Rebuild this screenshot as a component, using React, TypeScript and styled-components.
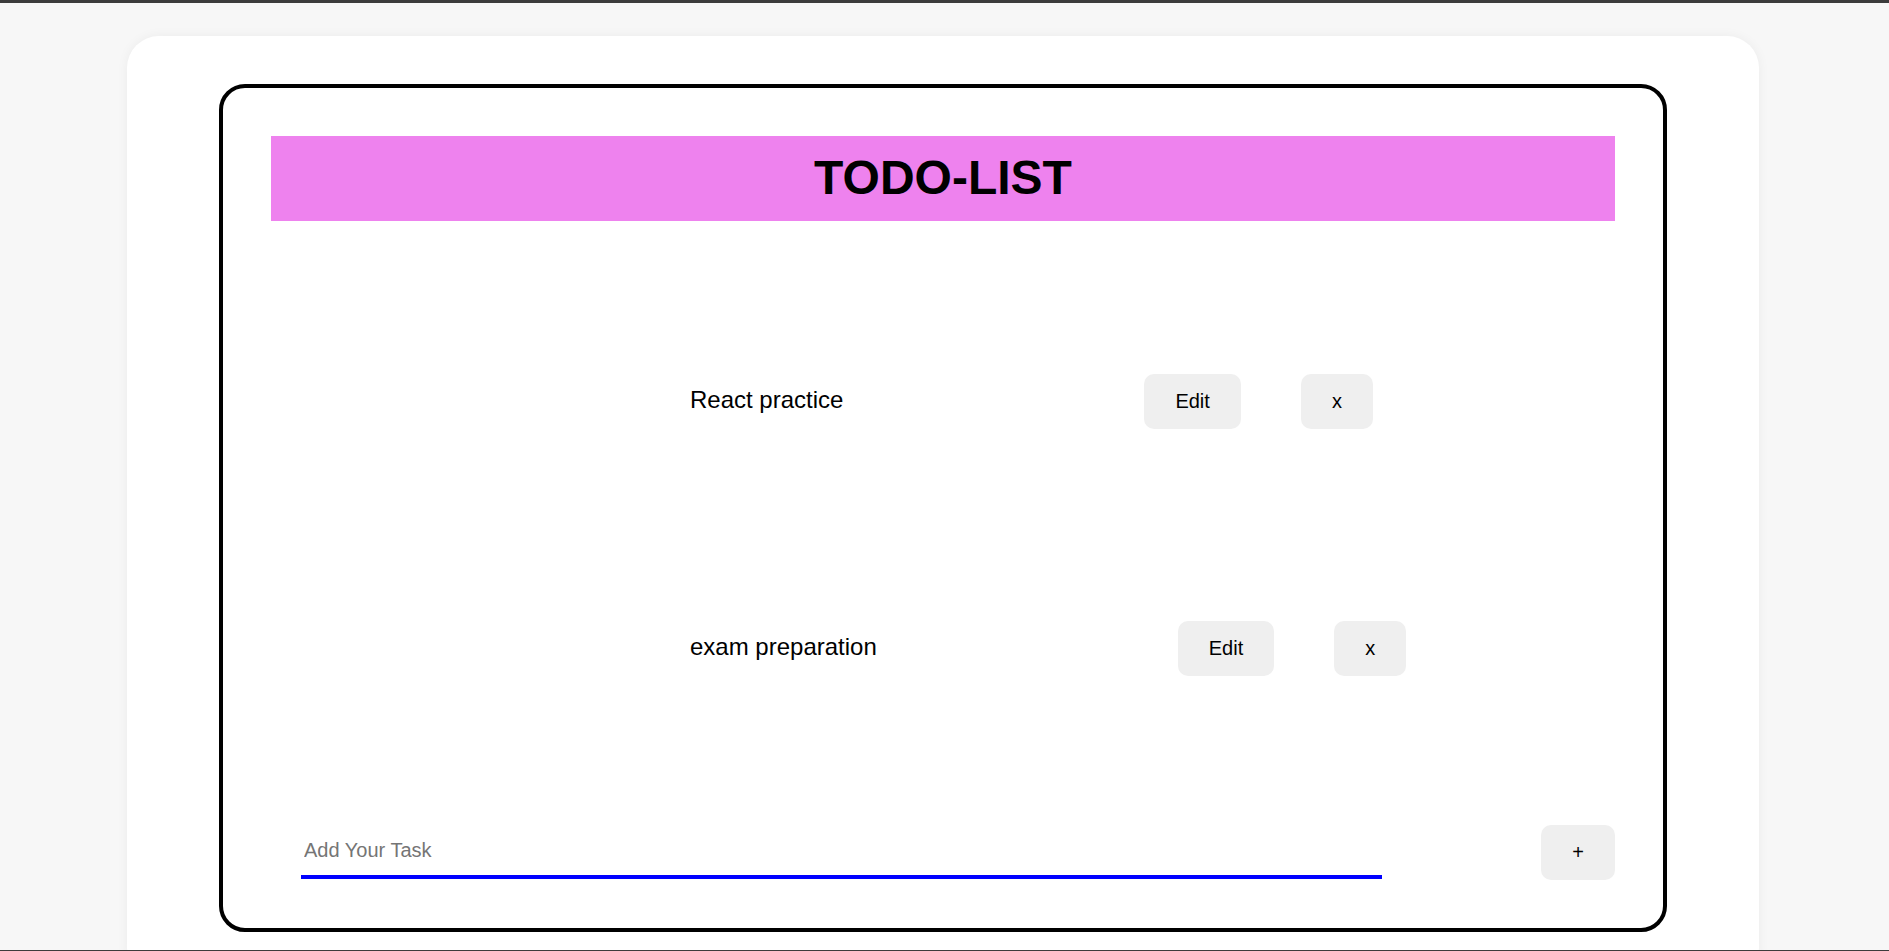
import React, { useState } from "react";
import styled, { createGlobalStyle } from "styled-components";

const GlobalStyle = createGlobalStyle`
  html, body {
    margin: 0;
    padding: 0;
    background: #f7f7f7;
    font-family: "Liberation Sans", Arial, sans-serif;
  }
  body::before {
    content: "";
    position: fixed;
    top: 0;
    left: 0;
    right: 0;
    height: 3px;
    background: #3c3c3c;
    z-index: 10;
  }
  body::after {
    content: "";
    position: fixed;
    bottom: 0;
    left: 0;
    right: 0;
    height: 1px;
    background: #3c3c3c;
    z-index: 10;
  }
`;

const Page = styled.div`
  padding: 36px 3px 0 0;
`;

const Card = styled.main`
  width: 1632px;
  margin: 0 auto;
  box-sizing: border-box;
  padding: 48px 92px;
  background: #ffffff;
  border-radius: 32px;
  box-shadow: 0 0 12px rgba(0, 0, 0, 0.05);
`;

const Frame = styled.section`
  box-sizing: border-box;
  border: 4px solid #000000;
  border-radius: 26px;
  padding: 48px;
  display: flex;
  flex-direction: column;
`;

const Header = styled.h1`
  margin: 0;
  height: 85px;
  box-sizing: border-box;
  padding-bottom: 2px;
  display: flex;
  align-items: center;
  justify-content: center;
  background: #ee82ee;
  color: #000000;
  font-size: 48px;
  font-weight: 700;
`;

const List = styled.ul`
  list-style: none;
  margin: 153px 0 149px;
  padding: 0 0 0 419px;
  display: flex;
  flex-direction: column;
  gap: 192px;
`;

const Row = styled.li`
  display: flex;
  align-items: center;
  height: 55px;
`;

const TaskText = styled.span`
  font-size: 24px;
  color: #000000;
  margin-right: 301px;
  padding-bottom: 4px;
`;

const Button = styled.button<{ $gap?: number }>`
  font-family: "Liberation Sans", Arial, sans-serif;
  font-size: 20px;
  line-height: 23px;
  padding: 16px 31px;
  height: 55px;
  border: none;
  border-radius: 10px;
  background: #efefef;
  color: #000000;
  margin-left: ${(p) => p.$gap ?? 0}px;
  cursor: pointer;
`;

const AddRow = styled.div`
  display: flex;
  align-items: flex-end;
  justify-content: space-between;
`;

const TaskInput = styled.input`
  width: 1081px;
  box-sizing: border-box;
  margin: 0 0 1px 30px;
  padding: 11px 3px 13px;
  border: none;
  border-bottom: 4px solid #0000ff;
  outline: none;
  font-family: "Liberation Sans", Arial, sans-serif;
  font-size: 20px;
  line-height: 23px;
  color: #000000;
  background: transparent;

  &::placeholder {
    color: #757575;
  }
`;

const initial = ["React practice", "exam preparation"];

export default function App() {
  const [tasks] = useState<string[]>(initial);
  const [value, setValue] = useState("");

  return (
    <>
      <GlobalStyle />
      <Page>
        <Card>
          <Frame>
            <Header>TODO-LIST</Header>
            <List>
              {tasks.map((t) => (
                <Row key={t}>
                  <TaskText>{t}</TaskText>
                  <Button>Edit</Button>
                  <Button $gap={60}>x</Button>
                </Row>
              ))}
            </List>
            <AddRow>
              <TaskInput
                autoFocus
                placeholder="Add Your Task"
                value={value}
                onChange={(e) => setValue(e.target.value)}
              />
              <Button>+</Button>
            </AddRow>
          </Frame>
        </Card>
      </Page>
    </>
  );
}
